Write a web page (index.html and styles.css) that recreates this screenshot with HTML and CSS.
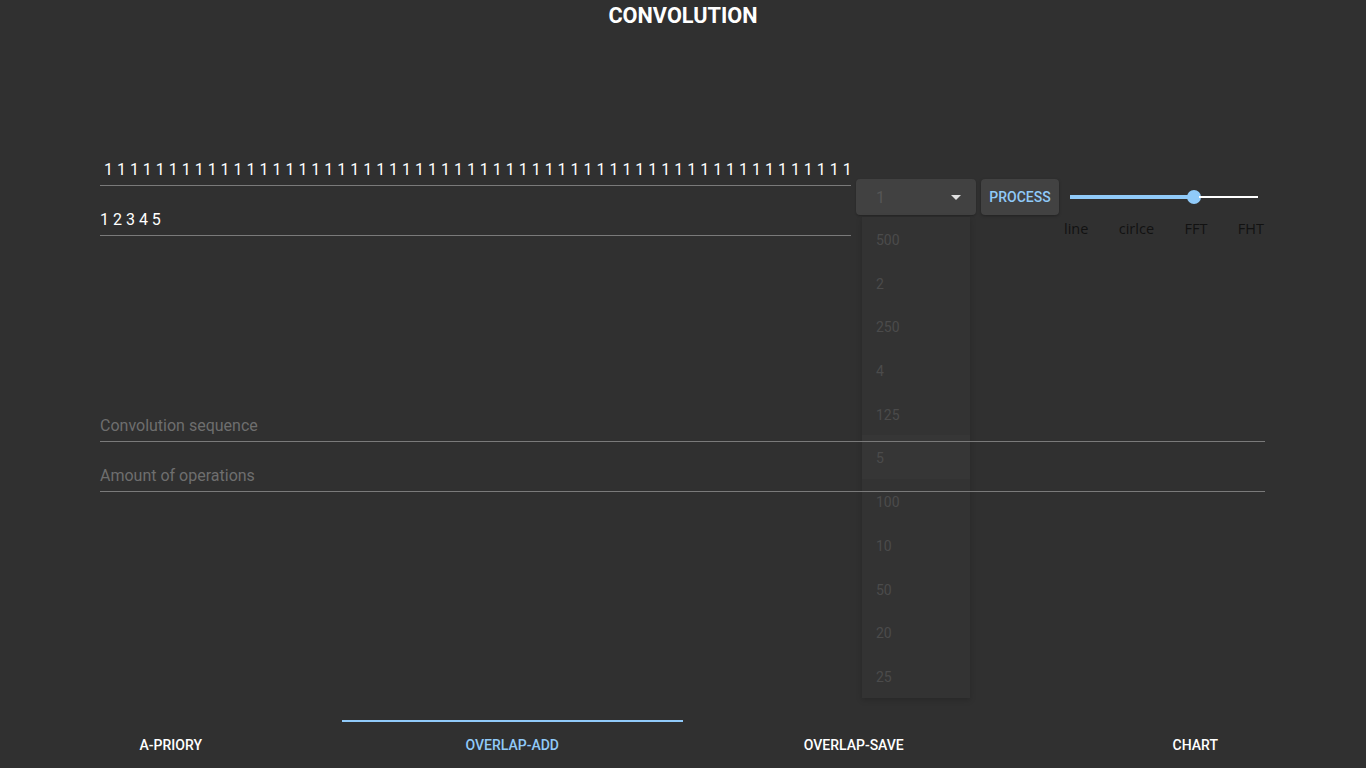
FILE: index.html
```html
<!DOCTYPE html>
<html lang="en">
<head>
<meta charset="utf-8">
<title>Convolution</title>
<link rel="stylesheet" href="styles.css">
</head>
<body>
<div class="app">
  <h1 class="title">CONVOLUTION</h1>
  <main class="content">
    <div class="top-row">
      <div class="inputs">
        <div class="field"><div class="field-text"> 1 1 1 1 1 1 1 1 1 1 1 1 1 1 1 1 1 1 1 1 1 1 1 1 1 1 1 1 1 1 1 1 1 1 1 1 1 1 1 1 1 1 1 1 1 1 1 1 1 1 1 1 1 1 1 1 1 1</div></div>
        <div class="field gap"><div class="field-text">1 2 3 4 5</div></div>
      </div>
      <div class="controls">
        <div class="select-wrap">
          <div class="select">
            <span class="select-value">1</span>
            <svg class="caret" width="10" height="5" viewBox="0 0 10 5"><path d="M0 0h10L5 5z" fill="#e0e0e0"/></svg>
          </div>
          <ul class="menu">
            <li class="menu-item">500</li>
            <li class="menu-item">2</li>
            <li class="menu-item">250</li>
            <li class="menu-item">4</li>
            <li class="menu-item">125</li>
            <li class="menu-item hover">5</li>
            <li class="menu-item">100</li>
            <li class="menu-item">10</li>
            <li class="menu-item">50</li>
            <li class="menu-item">20</li>
            <li class="menu-item">25</li>
          </ul>
        </div>
        <button class="process">PROCESS</button>
        <div class="slider-group">
          <div class="slider">
            <div class="track-active"></div>
            <div class="thumb"></div>
            <div class="track-rest"></div>
          </div>
          <div class="marks">
            <span>line</span><span>cirlce</span><span>FFT</span><span>FHT</span>
          </div>
        </div>
      </div>
    </div>
    <div class="results">
      <div class="field wide"><div class="field-text placeholder">Convolution sequence</div></div>
      <div class="field wide gap"><div class="field-text placeholder">Amount of operations</div></div>
    </div>
  </main>
  <nav class="tabs">
    <div class="tab">A-PRIORY</div>
    <div class="tab active">OVERLAP-ADD</div>
    <div class="tab">OVERLAP-SAVE</div>
    <div class="tab">CHART</div>
  </nav>
</div>
</body>
</html>
```

FILE: styles.css
```css
* { box-sizing: border-box; }
html, body {
  margin: 0;
  padding: 0;
  background: #303030;
}
body {
  font-family: Roboto, "Liberation Sans", sans-serif;
  color: #fff;
}
.app {
  width: 1366px;
  height: 768px;
  display: flex;
  flex-direction: column;
  overflow: hidden;
}
.title {
  margin: 0;
  padding-top: 3px;
  height: 154px;
  text-align: center;
  font-size: 21.7px;
  font-weight: 700;
  line-height: 26px;
}
.content {
  flex: 1;
  padding-left: 100px;
}
.top-row {
  display: flex;
  align-items: flex-start;
}
.inputs {
  width: 751px;
}
.field {
  position: relative;
  z-index: 2;
  height: 32px;
  border-bottom: 1px solid #7a7a7a;
  padding: 6px 0 0 0;
}
.field.gap { margin-top: 18px; }
.field-text {
  font-size: 16px;
  line-height: 19px;
  white-space: pre;
  color: #fff;
}
.field-text.placeholder { color: #6e6e6e; }
.controls {
  display: flex;
  align-items: flex-start;
  margin-top: 25px;
  margin-left: 5px;
}
.select-wrap {
  position: relative;
  width: 120px;
}
.select {
  height: 36px;
  background: #414141;
  border-radius: 4px;
  display: flex;
  align-items: center;
  justify-content: space-between;
  padding: 0 15px 0 20px;
  box-shadow: 0 1px 2px rgba(0,0,0,0.25);
}
.select-value {
  color: #565656;
  font-size: 16px;
}
.caret { display: block; margin-top: 1px; }
.menu {
  position: absolute;
  z-index: 1;
  left: 6px;
  top: 38px;
  width: 108px;
  margin: 0;
  padding: 0;
  list-style: none;
  background: #333333;
  box-shadow: 0 2px 6px rgba(0,0,0,0.18);
}
.menu-item {
  height: 43.7px;
  line-height: 47.5px;
  padding-left: 14px;
  font-size: 14px;
  color: #4b4b4b;
}
.menu-item.hover { background: #363636; }
.process {
  margin-left: 5px;
  width: 78px;
  height: 36px;
  border: none;
  border-radius: 4px;
  background: #424242;
  color: #90caf9;
  font-family: Roboto, "Liberation Sans", sans-serif;
  font-weight: 500;
  font-size: 14px;
  padding: 0;
  box-shadow: 0 1px 3px rgba(0,0,0,0.3);
}
.slider-group {
  width: 200px;
  margin-left: 5px;
}
.slider {
  height: 36px;
  padding: 0 6px;
  display: flex;
  align-items: center;
}
.track-active {
  width: 119px;
  height: 4px;
  background: #90caf9;
}
.thumb {
  width: 14px;
  height: 14px;
  border-radius: 50%;
  background: #90caf9;
  margin: 0 -2px 0 -2px;
}
.track-rest {
  flex: 1;
  height: 2px;
  background: #fff;
}
.marks {
  display: flex;
  justify-content: space-between;
  margin-top: 4px;
  font-family: "Open Sans", "DejaVu Sans", sans-serif;
  font-size: 14.5px;
  line-height: 20px;
  color: #121212;
}
.results {
  margin-top: 171px;
  width: 1165px;
}
.field.wide { width: 1165px; }
.tabs {
  height: 48px;
  display: flex;
  flex: none;
}
.tab {
  flex: 1;
  display: flex;
  align-items: center;
  justify-content: center;
  font-size: 14px;
  font-weight: 500;
  color: #fff;
  border-top: 2px solid transparent;
  padding-bottom: 1px;
}
.tab.active {
  color: #90caf9;
  border-top-color: #90caf9;
}
```
